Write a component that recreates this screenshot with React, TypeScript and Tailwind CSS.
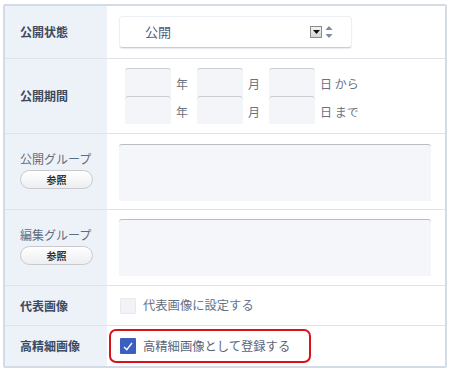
import React from "react";

const font = { fontFamily: '"Noto Sans CJK JP", "Noto Sans", sans-serif' };

function Label({ children }: { children: React.ReactNode }) {
  return (
    <div className="w-[102px] shrink-0 bg-[#edf2f9] flex items-center pl-[15px] text-[12px] font-bold text-[#3d4a5e]">
      {children}
    </div>
  );
}

function DateBox() {
  return <div className="w-[46px] h-[28px] bg-[#f3f5f9] border-t border-[#c9ccd2] rounded-t-[3px]" />;
}

function DateLine({ end }: { end: string }) {
  return (
    <div className="flex items-center h-[28px] text-[12px] text-[#6a7383]">
      <DateBox />
      <span className="ml-[5px] w-[21px] pt-[3px]">年</span>
      <DateBox />
      <span className="ml-[5px] w-[21px] pt-[3px]">月</span>
      <DateBox />
      <span className="ml-[5px] pt-[3px]">{end}</span>
    </div>
  );
}

function RefButton() {
  return (
    <div className="mt-[3px] w-[73px] h-[19px] rounded-full border border-[#c8cacf] bg-gradient-to-b from-white to-[#eceef1] flex items-center justify-center text-[10px] font-bold text-[#333]">
      参照
    </div>
  );
}

function TextArea() {
  return <div className="w-[312px] h-[57px] bg-[#f4f6fa] border-t border-[#b9bcc2] rounded-t-[3px]" />;
}

export default function App() {
  return (
    <div className="w-[451px] h-[373px] bg-white pt-[4px] pl-[3px]" style={font}>
      <div className="w-[444px] border-2 border-[#d3dbe6] rounded-[2px] flex flex-col bg-white">
        {/* Row 1 */}
        <div className="flex h-[53px] border-b border-[#dfe4ec]">
          <Label>公開状態</Label>
          <div className="flex-1 flex items-center pl-[12px]">
            <div className="w-[233px] h-[32px] bg-white rounded-[4px] border border-[#eceff3] border-b-[#c9ced6] shadow-[0_1px_1px_rgba(0,0,0,0.08)] flex items-center pl-[25px] pr-[18px] text-[13px] text-[#4d5d7c]">
              <span className="flex-1">公開</span>
              <div className="w-[12px] h-[12px] border border-[#8a8a8a] bg-gradient-to-b from-[#f4f4f4] to-[#d6d6d6] flex items-center justify-center">
                <svg width="7" height="4" viewBox="0 0 7 4"><path d="M0 0H7L3.5 4Z" fill="#111" /></svg>
              </div>
              <svg className="ml-[3px]" width="8" height="14" viewBox="0 0 8 14">
                <path d="M4 1L7.5 5H0.5Z" fill="#7c8ba3" />
                <path d="M4 13L7.5 9H0.5Z" fill="#7c8ba3" />
              </svg>
            </div>
          </div>
        </div>
        {/* Row 2 */}
        <div className="flex h-[75px] border-b border-[#dfe4ec]">
          <Label>公開期間</Label>
          <div className="flex-1 flex flex-col pl-[18px] pt-[9px]">
            <DateLine end="日 から" />
            <DateLine end="日 まで" />
          </div>
        </div>
        {/* Row 3 */}
        <div className="flex h-[76px] border-b border-[#dfe4ec]">
          <div className="w-[102px] shrink-0 bg-[#edf2f9] flex flex-col justify-center pl-[15px] pb-[4px]">
            <span className="text-[12px] text-[#5f6d82] leading-[16px]">公開グループ</span>
            <RefButton />
          </div>
          <div className="flex-1 pl-[12px] pt-[10px]">
            <TextArea />
          </div>
        </div>
        {/* Row 4 */}
        <div className="flex h-[76px] border-b border-[#dfe4ec]">
          <div className="w-[102px] shrink-0 bg-[#edf2f9] flex flex-col justify-center pl-[15px] pb-[4px]">
            <span className="text-[12px] text-[#5f6d82] leading-[16px]">編集グループ</span>
            <RefButton />
          </div>
          <div className="flex-1 pl-[12px] pt-[9px]">
            <TextArea />
          </div>
        </div>
        {/* Row 5 */}
        <div className="flex h-[40px] border-b border-[#dfe4ec]">
          <Label>代表画像</Label>
          <div className="flex-1 flex items-center pl-[13px]">
            <div className="w-[16px] h-[16px] bg-[#f1f3f7] border border-[#e6e9ee] rounded-[1px]" />
            <span className="ml-[7px] text-[12.3px] text-[#677183]">代表画像に設定する</span>
          </div>
        </div>
        {/* Row 6 */}
        <div className="flex h-[40px]">
          <Label>高精細画像</Label>
          <div className="flex-1 flex items-center pl-[2px]">
            <div className="w-[202px] h-[34px] border-2 border-[#d9121b] rounded-[7px] flex items-center pl-[9px]">
              <div className="w-[16px] h-[16px] bg-[#3b5fbe] rounded-[1px] flex items-center justify-center">
                <svg width="10" height="9" viewBox="0 0 10 9"><path d="M1 5L3.8 7.8L9 1" stroke="#fff" strokeWidth="1.4" fill="none" /></svg>
              </div>
              <span className="ml-[7px] text-[12.3px] text-[#5c6678]">高精細画像として登録する</span>
            </div>
          </div>
        </div>
      </div>
    </div>
  );
}
